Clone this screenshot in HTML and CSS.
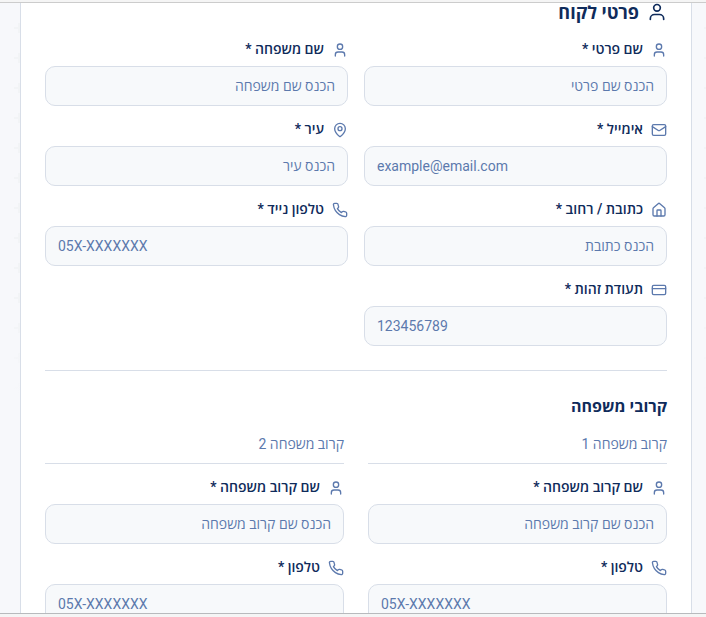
FILE: index.html
```html
<!DOCTYPE html>
<html lang="he" dir="rtl">
<head>
	<meta charset="UTF-8">
	<meta name="viewport" content="width=device-width, initial-scale=1.0">
	<title>פרטי לקוח</title>
	<link rel="stylesheet" href="styles.css">
</head>
<body>
	<svg class="sprite" aria-hidden="true">
		<symbol id="user" viewBox="0 0 24 24"><path d="M19 21v-2a4 4 0 0 0-4-4H9a4 4 0 0 0-4 4v2"/><circle cx="12" cy="7" r="4"/></symbol>
		<symbol id="user-wide" viewBox="0 0 24 24"><path d="M20 21v-1a5 5 0 0 0-5-5H9a5 5 0 0 0-5 5v1"/><circle cx="12" cy="7" r="4"/></symbol>
		<symbol id="mail" viewBox="0 0 24 24"><rect width="20" height="16" x="2" y="4" rx="2"/><path d="m22 7-8.97 5.7a1.94 1.94 0 0 1-2.06 0L2 7"/></symbol>
		<symbol id="pin" viewBox="0 0 24 24"><path d="M20 10c0 4.993-5.539 10.193-7.399 11.799a1 1 0 0 1-1.202 0C9.539 20.193 4 14.993 4 10a8 8 0 0 1 16 0"/><circle cx="12" cy="10" r="3"/></symbol>
		<symbol id="house" viewBox="0 0 24 24"><path d="M15 21v-8a1 1 0 0 0-1-1h-4a1 1 0 0 0-1 1v8"/><path d="M3 10a2 2 0 0 1 .709-1.528l7-5.999a2 2 0 0 1 2.582 0l7 5.999A2 2 0 0 1 21 10v9a2 2 0 0 1-2 2H5a2 2 0 0 1-2-2z"/></symbol>
		<symbol id="phone" viewBox="0 0 24 24"><path d="M22 16.92v3a2 2 0 0 1-2.18 2 19.79 19.79 0 0 1-8.63-3.07 19.5 19.5 0 0 1-6-6 19.79 19.79 0 0 1-3.07-8.67A2 2 0 0 1 4.11 2h3a2 2 0 0 1 2 1.72 12.84 12.84 0 0 0 .7 2.81 2 2 0 0 1-.45 2.11L8.09 9.91a16 16 0 0 0 6 6l1.27-1.27a2 2 0 0 1 2.11-.45 12.84 12.84 0 0 0 2.81.7A2 2 0 0 1 22 16.92z"/></symbol>
		<symbol id="card" viewBox="0 0 24 24"><rect width="20" height="14" x="2" y="5" rx="2"/><path d="M2 10h20"/></symbol>
	</svg>

	<main class="page">
		<form class="card">
			<h1 class="title"><svg class="icon icon-big"><use href="#user-wide"/></svg>פרטי לקוח</h1>

			<div class="fields">
				<div class="field">
					<label for="firstName"><svg class="icon"><use href="#user"/></svg>שם פרטי *</label>
					<input type="text" id="firstName" placeholder="הכנס שם פרטי">
				</div>
				<div class="field">
					<label for="lastName"><svg class="icon"><use href="#user"/></svg>שם משפחה *</label>
					<input type="text" id="lastName" placeholder="הכנס שם משפחה">
				</div>
				<div class="field">
					<label for="email"><svg class="icon"><use href="#mail"/></svg>אימייל *</label>
					<input type="email" id="email" dir="ltr" placeholder="example@email.com">
				</div>
				<div class="field">
					<label for="city"><svg class="icon"><use href="#pin"/></svg>עיר *</label>
					<input type="text" id="city" placeholder="הכנס עיר">
				</div>
				<div class="field">
					<label for="address"><svg class="icon"><use href="#house"/></svg>כתובת / רחוב *</label>
					<input type="text" id="address" placeholder="הכנס כתובת">
				</div>
				<div class="field">
					<label for="mobile"><svg class="icon"><use href="#phone"/></svg>טלפון נייד *</label>
					<input type="tel" id="mobile" dir="ltr" placeholder="05X-XXXXXXX">
				</div>
				<div class="field">
					<label for="idNumber"><svg class="icon"><use href="#card"/></svg>תעודת זהות *</label>
					<input type="text" id="idNumber" dir="ltr" placeholder="123456789">
				</div>
			</div>

			<section class="relatives">
				<h2 class="subtitle">קרובי משפחה</h2>
				<div class="relatives-grid">
					<div class="relative">
						<h3 class="relative-name">קרוב משפחה 1</h3>
						<div class="field">
							<label for="rel1Name"><svg class="icon"><use href="#user"/></svg>שם קרוב משפחה *</label>
							<input type="text" id="rel1Name" placeholder="הכנס שם קרוב משפחה">
						</div>
						<div class="field">
							<label for="rel1Phone"><svg class="icon"><use href="#phone"/></svg>טלפון *</label>
							<input type="tel" id="rel1Phone" dir="ltr" placeholder="05X-XXXXXXX">
						</div>
					</div>
					<div class="relative">
						<h3 class="relative-name">קרוב משפחה 2</h3>
						<div class="field">
							<label for="rel2Name"><svg class="icon"><use href="#user"/></svg>שם קרוב משפחה *</label>
							<input type="text" id="rel2Name" placeholder="הכנס שם קרוב משפחה">
						</div>
						<div class="field">
							<label for="rel2Phone"><svg class="icon"><use href="#phone"/></svg>טלפון *</label>
							<input type="tel" id="rel2Phone" dir="ltr" placeholder="05X-XXXXXXX">
						</div>
					</div>
				</div>
			</section>
		</form>
	</main>
</body>
</html>
```

FILE: styles.css
```css
* {
	box-sizing: border-box;
	margin: 0;
	padding: 0;
}

body {
	height: 100vh;
	display: flex;
	flex-direction: column;
	overflow: hidden;
	border-top: 2px solid #f5f5f5;
	border-bottom: 3px solid #f5f5f5;
	font-family: Roboto, "Open Sans", sans-serif;
	font-size: 14px;
	color: #0f2b5b;
}

.sprite {
	display: none;
}

/* faint plus pattern, fading out towards the bottom */
.page {
	flex: 1;
	min-height: 0;
	overflow: hidden;
	padding: 0 14px 0 20px;
	border-top: 1px solid #cccccc;
	border-bottom: 1px solid #b8babd;
	background:
		linear-gradient(transparent 50%, #f7f8fb 65%),
		url("data:image/svg+xml,%3Csvg xmlns='http://www.w3.org/2000/svg' width='30' height='30'%3E%3Cpath d='M4 0h2v4h4v2H6v4H4V6H0V4h4z' fill='%23f2f4f6'/%3E%3C/svg%3E") 14px 20px,
		#f7f8fb;
}

.card {
	padding: 0 24px 24px;
	background: #ffffff;
	border: solid #d8dee8;
	border-width: 0 1px;
}

.title {
	display: flex;
	align-items: center;
	gap: 8px;
	height: 18px;
	margin-bottom: 21px;
	font-size: 18px;
	font-weight: 700;
}

.icon {
	flex: none;
	width: 16px;
	height: 16px;
	fill: none;
	stroke: #5c79ad;
	stroke-width: 2;
	stroke-linecap: round;
	stroke-linejoin: round;
}

.icon-big {
	width: 20px;
	height: 20px;
	stroke: #0f2b5b;
}

.fields {
	display: grid;
	grid-template-columns: 1fr 1fr;
	gap: 16px;
}

.field {
	display: flex;
	flex-direction: column;
	gap: 8px;
}

.field label {
	display: flex;
	align-items: flex-start;
	gap: 8px;
	height: 16px;
	line-height: 14px;
	font-weight: 600;
}

.field input {
	width: 100%;
	height: 40px;
	padding: 0 12px;
	border: 1px solid #d8dee8;
	border-radius: 10px;
	background: #f7f9fb;
	font: inherit;
	color: inherit;
}

.field input::placeholder {
	color: #5c79ad;
	opacity: 1;
}

.relatives {
	margin-top: 24px;
	padding-top: 24px;
	border-top: 1px solid #d8dee8;
}

.subtitle {
	font-size: 16px;
	line-height: 24px;
	font-weight: 700;
	margin-bottom: 16px;
}

.relatives-grid {
	display: grid;
	grid-template-columns: 1fr 1fr;
	gap: 24px;
}

.relative {
	display: flex;
	flex-direction: column;
	gap: 16px;
}

.relative-name {
	padding-bottom: 10px;
	border-bottom: 1px solid #d8dee8;
	font-size: 14px;
	line-height: 18px;
	font-weight: 400;
	color: #5c79ad;
}
```
